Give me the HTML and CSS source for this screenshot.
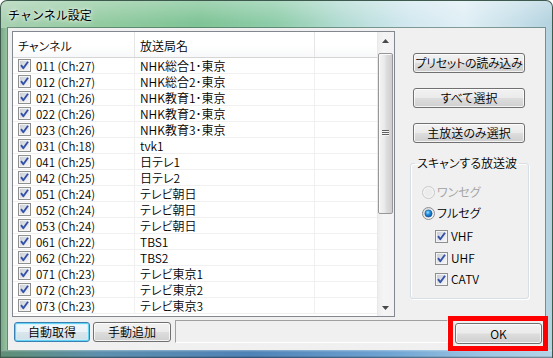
FILE: index.html
```html
<!DOCTYPE html>
<html lang="ja">
<head>
<meta charset="utf-8">
<title>チャンネル設定</title>
<link rel="stylesheet" href="styles.css">
</head>
<body>
<svg class="defs" width="0" height="0" aria-hidden="true">
  <defs>
    <linearGradient id="cbfill" x1="0" y1="0" x2="1" y2="1">
      <stop offset="0" stop-color="#c9ced6"/>
      <stop offset="1" stop-color="#f7f7f7"/>
    </linearGradient>
    <radialGradient id="dot" cx="0.4" cy="0.35" r="0.7">
      <stop offset="0" stop-color="#9ce3ff"/>
      <stop offset="0.45" stop-color="#1f8ee0"/>
      <stop offset="1" stop-color="#0b4f9c"/>
    </radialGradient>
    <linearGradient id="rdfill" x1="0" y1="0" x2="1" y2="1">
      <stop offset="0" stop-color="#d3d6db"/>
      <stop offset="1" stop-color="#fbfbfb"/>
    </linearGradient>
  </defs>
  <symbol id="cb" viewBox="0 0 13 13">
    <rect x="0.5" y="0.5" width="12" height="12" fill="#f4f4f4" stroke="#8e8f8f"/>
    <rect x="2" y="2" width="9" height="9" fill="url(#cbfill)"/>
    <path d="M3 6.2 L5.3 9.2 L10 2.8" fill="none" stroke="#3552a8" stroke-width="1.9" stroke-linejoin="round"/>
  </symbol>
  <symbol id="rd-on" viewBox="0 0 13 13">
    <circle cx="6.5" cy="6.5" r="6" fill="url(#rdfill)" stroke="#8e8f8f"/>
    <circle cx="6.5" cy="6.5" r="3.6" fill="url(#dot)" stroke="#16508f" stroke-width="0.6"/>
  </symbol>
  <symbol id="rd-off" viewBox="0 0 13 13">
    <circle cx="6.5" cy="6.5" r="6" fill="#f4f4f4" stroke="#c8c8c8"/>
    <circle cx="6.5" cy="6.5" r="4.3" fill="#ececec"/>
  </symbol>
</svg>

<div class="window">
  <div class="titlebar"><span class="title">チャンネル設定</span></div>
  <div class="frame-mid">
    <div class="client">
      <div class="main">
        <div class="listview">
          <div class="lv-body">
            <div class="lv-header">
              <div class="hc c1">チャンネル</div>
              <div class="hc c2">放送局名</div>
              <div class="hc c3"></div>
            </div>
            <div class="row"><div class="cell c1"><svg class="cb"><use href="#cb"/></svg><span class="num">011 (Ch:27)</span></div><div class="cell c2">NHK総合1･東京</div><div class="cell c3"></div></div>
            <div class="row"><div class="cell c1"><svg class="cb"><use href="#cb"/></svg><span class="num">012 (Ch:27)</span></div><div class="cell c2">NHK総合2･東京</div><div class="cell c3"></div></div>
            <div class="row"><div class="cell c1"><svg class="cb"><use href="#cb"/></svg><span class="num">021 (Ch:26)</span></div><div class="cell c2">NHK教育1･東京</div><div class="cell c3"></div></div>
            <div class="row"><div class="cell c1"><svg class="cb"><use href="#cb"/></svg><span class="num">022 (Ch:26)</span></div><div class="cell c2">NHK教育2･東京</div><div class="cell c3"></div></div>
            <div class="row"><div class="cell c1"><svg class="cb"><use href="#cb"/></svg><span class="num">023 (Ch:26)</span></div><div class="cell c2">NHK教育3･東京</div><div class="cell c3"></div></div>
            <div class="row"><div class="cell c1"><svg class="cb"><use href="#cb"/></svg><span class="num">031 (Ch:18)</span></div><div class="cell c2">tvk1</div><div class="cell c3"></div></div>
            <div class="row"><div class="cell c1"><svg class="cb"><use href="#cb"/></svg><span class="num">041 (Ch:25)</span></div><div class="cell c2">日テレ1</div><div class="cell c3"></div></div>
            <div class="row"><div class="cell c1"><svg class="cb"><use href="#cb"/></svg><span class="num">042 (Ch:25)</span></div><div class="cell c2">日テレ2</div><div class="cell c3"></div></div>
            <div class="row"><div class="cell c1"><svg class="cb"><use href="#cb"/></svg><span class="num">051 (Ch:24)</span></div><div class="cell c2">テレビ朝日</div><div class="cell c3"></div></div>
            <div class="row"><div class="cell c1"><svg class="cb"><use href="#cb"/></svg><span class="num">052 (Ch:24)</span></div><div class="cell c2">テレビ朝日</div><div class="cell c3"></div></div>
            <div class="row"><div class="cell c1"><svg class="cb"><use href="#cb"/></svg><span class="num">053 (Ch:24)</span></div><div class="cell c2">テレビ朝日</div><div class="cell c3"></div></div>
            <div class="row"><div class="cell c1"><svg class="cb"><use href="#cb"/></svg><span class="num">061 (Ch:22)</span></div><div class="cell c2">TBS1</div><div class="cell c3"></div></div>
            <div class="row"><div class="cell c1"><svg class="cb"><use href="#cb"/></svg><span class="num">062 (Ch:22)</span></div><div class="cell c2">TBS2</div><div class="cell c3"></div></div>
            <div class="row"><div class="cell c1"><svg class="cb"><use href="#cb"/></svg><span class="num">071 (Ch:23)</span></div><div class="cell c2">テレビ東京1</div><div class="cell c3"></div></div>
            <div class="row"><div class="cell c1"><svg class="cb"><use href="#cb"/></svg><span class="num">072 (Ch:23)</span></div><div class="cell c2">テレビ東京2</div><div class="cell c3"></div></div>
            <div class="row"><div class="cell c1"><svg class="cb"><use href="#cb"/></svg><span class="num">073 (Ch:23)</span></div><div class="cell c2">テレビ東京3</div><div class="cell c3"></div></div>
          </div>
          <div class="vscroll">
            <div class="sb-btn"><svg class="arrow" viewBox="0 0 7 4"><polygon points="0,4 3.5,0 7,4" fill="#4a4a4a"/></svg></div>
            <div class="sb-gap"></div>
            <div class="sb-thumb"><span class="grip"></span></div>
            <div class="sb-track"></div>
            <div class="sb-btn"><svg class="arrow" viewBox="0 0 7 4"><polygon points="0,0 7,0 3.5,4" fill="#4a4a4a"/></svg></div>
          </div>
        </div>
        <div class="side">
          <button class="btn side-btn">プリセットの読み込み</button>
          <button class="btn side-btn">すべて選択</button>
          <button class="btn side-btn">主放送のみ選択</button>
          <fieldset class="group">
            <legend>スキャンする放送波</legend>
            <div class="opt radio r1 disabled"><svg class="rd"><use href="#rd-off"/></svg><span>ワンセグ</span></div>
            <div class="opt radio r2"><svg class="rd"><use href="#rd-on"/></svg><span>フルセグ</span></div>
            <div class="opt sub s1"><svg class="cb"><use href="#cb"/></svg><span>VHF</span></div>
            <div class="opt sub s2"><svg class="cb"><use href="#cb"/></svg><span>UHF</span></div>
            <div class="opt sub s3"><svg class="cb"><use href="#cb"/></svg><span>CATV</span></div>
          </fieldset>
        </div>
      </div>
      <div class="bottom">
        <button class="btn focus b-auto">自動取得</button>
        <button class="btn b-manual">手動追加</button>
        <div class="status"></div>
        <button class="btn b-ok">OK</button>
      </div>
    </div>
  </div>
  <div class="frame-bottom"></div>
  <div class="highlight"></div>
</div>
</body>
</html>
```

FILE: styles.css
```css
* { box-sizing: border-box; }
html, body { margin: 0; padding: 0; }
body {
  width: 553px;
  height: 358px;
  overflow: hidden;
  background: #ffffff;
  color: #000;
  font-family: "Noto Sans CJK JP", "Liberation Sans", sans-serif;
  font-size: 12px;
  font-weight: 350;
}
.defs { position: absolute; width: 0; height: 0; overflow: hidden; }

.window {
  position: relative;
  width: 553px;
  height: 358px;
  display: flex;
  flex-direction: column;
  border: 1px solid #3e5a4e;
  border-bottom: none;
  border-radius: 7px 7px 0 0;
  overflow: hidden;
  background:
    linear-gradient(180deg, rgba(255,255,255,0.28) 0, rgba(255,255,255,0) 22px),
    linear-gradient(90deg, #a9d1b2 0%, #93cba1 18%, #7fc496 36%, #8fcdaa 50%, #b4dcd4 62%, #d2e8f0 74%, #e0eff5 84%, #c6dfe9 94%, #b3d2df 100%);
}

.titlebar {
  height: 27px;
  flex: none;
  display: flex;
  align-items: center;
  padding-left: 7px;
  padding-top: 1px;
}
.title {
  font-size: 12px;
  font-weight: 400;
  line-height: 14px;
  color: #000;
  text-shadow: 0 0 6px rgba(255,255,255,0.95), 0 0 3px rgba(255,255,255,0.9);
}

.frame-mid {
  flex: 1;
  display: flex;
  padding: 0 7px;
  min-height: 0;
  background: linear-gradient(90deg, rgba(40,100,60,0.35) 0, rgba(40,100,60,0.1) 7px, rgba(0,0,0,0) 8px);
}
.client {
  width: 537px;
  height: 322px;
  background: #f0f0f0;
  box-shadow: 0 0 0 1px rgba(56, 88, 74, 0.55);
  padding: 3px 0 0 4px;
  display: flex;
  flex-direction: column;
}
.frame-bottom {
  height: 8px;
  flex: none;
  background:
    linear-gradient(180deg, rgba(255,255,255,0.35) 0, rgba(255,255,255,0) 2px, rgba(0,0,0,0) 6px, rgba(0,0,0,0.45) 8px),
    linear-gradient(90deg, #5f8f76 0%, #5d8fae 18%, #4f82b6 45%, #6ea3d2 70%, #9ec6e4 88%, #b4d3e6 100%);
}

.main {
  display: grid;
  grid-template-columns: 383px 1fr;
  height: 286px;
}

/* List view */
.listview {
  border: 1px solid #828790;
  background: #fff;
  display: flex;
  overflow: hidden;
}
.lv-body {
  width: 364px;
  display: flex;
  flex-direction: column;
}
.lv-header {
  display: flex;
  height: 26px;
  border-bottom: 1px solid #d5d5d5;
  background: linear-gradient(180deg, #ffffff 0%, #ffffff 55%, #f7f8f9 100%);
  font-feature-settings: "palt";
}
.hc {
  display: flex;
  align-items: center;
  padding-left: 5px;
  border-right: 1px solid #e5e5e5;
  padding-top: 2px;
  line-height: 14px;
}
.c1 { width: 122px; flex: none; }
.c2 { width: 180px; flex: none; }
.c3 { flex: 1; }
.hc.c3 { border-right: none; }

.row {
  display: flex;
  height: 16px;
  border-bottom: 1px solid #f0f0f0;
}
.cell {
  display: flex;
  align-items: center;
  padding-left: 5px;
  border-right: 1px solid #f0f0f0;
  line-height: 14px;
  white-space: nowrap;
  font-feature-settings: "palt";
}
.cell.c3 { border-right: none; }
.cb { width: 13px; height: 13px; flex: none; display: block; }
.num { margin-left: 5px; font-size: 11.5px; }

/* scrollbar */
.vscroll {
  width: 17px;
  display: flex;
  flex-direction: column;
  background: linear-gradient(90deg, #e3e3e3 0, #eeeeee 1px, #f5f5f5 40%, #f2f2f2 100%);
}
.sb-btn {
  height: 17px;
  flex: none;
  display: flex;
  align-items: center;
  justify-content: center;
}
.arrow { width: 7px; height: 4px; display: block; }
.sb-gap { height: 4px; flex: none; }
.sb-thumb {
  height: 161px;
  flex: none;
  margin: 0 1px;
  border: 1px solid #979797;
  border-radius: 2px;
  background: linear-gradient(90deg, #f3f3f3 0%, #ebebeb 40%, #dcdcdc 60%, #cfcfcf 100%);
  box-shadow: inset 1px 1px 0 #fafafa;
  display: flex;
  align-items: center;
  justify-content: center;
}
.grip {
  width: 7px;
  height: 6px;
  display: block;
  background: repeating-linear-gradient(180deg, #606060 0, #606060 1px, #f4f4f4 1px, #f4f4f4 2px);
  margin-top: -2px;
}
.sb-track { flex: 1; }

/* side panel */
.side {
  display: flex;
  flex-direction: column;
  align-items: flex-start;
  padding-top: 22px;
}
.btn {
  font-family: "Noto Sans CJK JP", "Liberation Sans", sans-serif;
  font-size: 12px;
  font-weight: 350;
  font-feature-settings: "palt";
  line-height: 14px;
  color: #000;
  height: 20px;
  padding: 0;
  border: 1px solid #707070;
  border-radius: 3px;
  background: linear-gradient(180deg, #f2f2f2 0%, #ebebeb 48%, #dddddd 52%, #cfcfcf 100%);
  box-shadow: inset 0 0 0 1px rgba(255,255,255,0.75);
  display: flex;
  align-items: center;
  justify-content: center;
  white-space: nowrap;
}
.side-btn {
  width: 112px;
  margin-left: 18px;
  margin-bottom: 15px;
}
.side-btn:first-child { letter-spacing: -0.3px; }
.group {
  margin: -2px 0 0 15px;
  width: 119px;
  padding: 0 4px 11px 4px;
  border: 1px solid #d5dfe5;
  border-radius: 3px;
  box-shadow: inset 1px 1px 0 #ffffff, 1px 1px 0 #ffffff;
  display: flex;
  flex-direction: column;
  font-feature-settings: "palt";
}
.group legend {
  padding: 0 2px;
  line-height: 14px;
  font-size: 12px;
  margin-left: 0;
}
.opt {
  display: flex;
  align-items: center;
  height: 16px;
  line-height: 14px;
}
.rd { width: 13px; height: 13px; display: block; flex: none; margin-left: 7px; margin-right: 2px; }
.r1 { margin-top: 14px; }
.r2 { margin-top: 5px; }
.s1 { margin-top: 7px; }
.s2 { margin-top: 6px; }
.s3 { margin-top: 5px; }
.disabled { color: #a0a0a0; }
.sub .cb { margin-left: 20px; margin-right: 3px; }

/* bottom row */
.bottom {
  display: flex;
  align-items: flex-start;
  margin-top: 3px;
}
.b-auto { width: 76px; margin: 2px 0 0 2px; }
.b-manual { width: 78px; margin: 2px 0 0 3px; }
.status {
  width: 273px;
  height: 23px;
  margin-left: 4px;
  border-top: 1px solid #a0a0a0;
  border-left: 1px solid #a0a0a0;
  border-bottom: 1px solid #ffffff;
  border-right: 1px solid #ffffff;
  background: #f0f0f0;
}
.b-ok {
  width: 87px;
  height: 21px;
  margin: 3px 0 0 7px;
}
.btn.focus {
  border-color: #3c7fb1;
  box-shadow: inset 0 0 0 1px #61d3f6, inset 0 0 0 2px rgba(200,240,252,0.6);
  background: linear-gradient(180deg, #f1f8fb 0%, #eaf3f7 48%, #d9e6ec 52%, #cfdfe6 100%);
}

/* annotation overlay */
.highlight {
  position: absolute;
  left: 447px;
  top: 315px;
  width: 100px;
  height: 35px;
  border: 5px solid #ff0000;
  pointer-events: none;
}
```
